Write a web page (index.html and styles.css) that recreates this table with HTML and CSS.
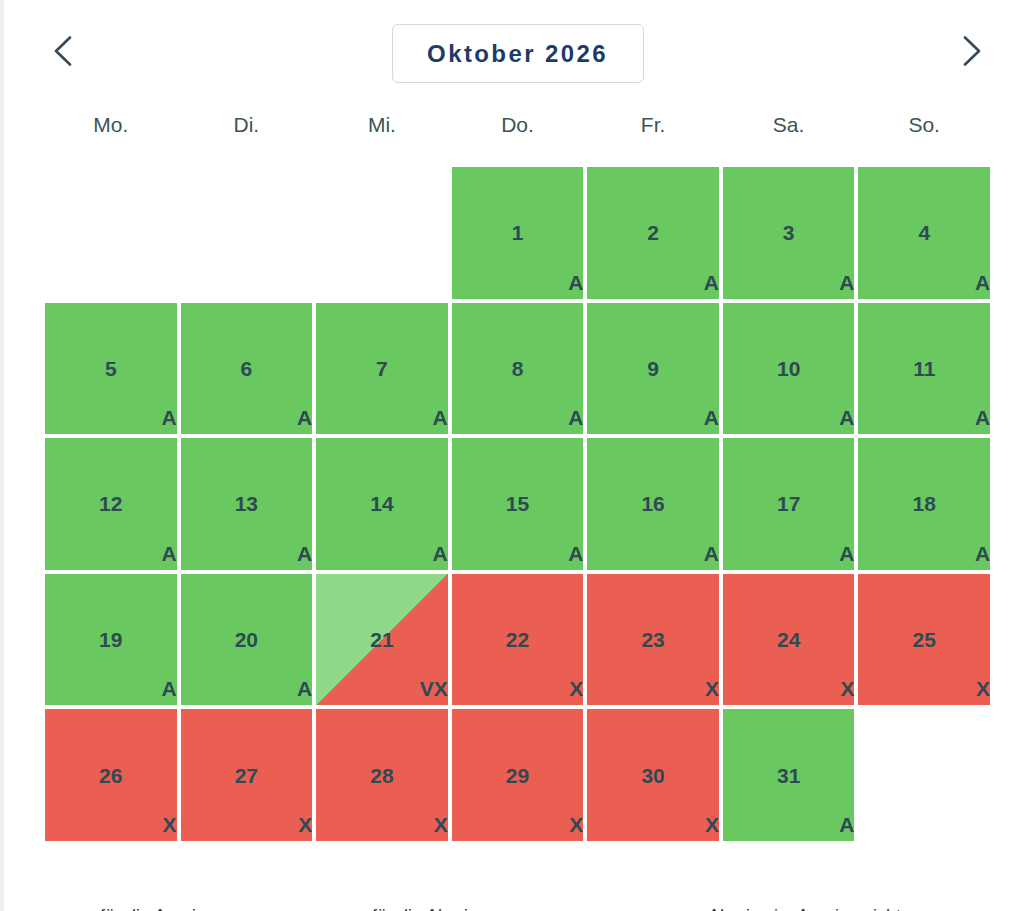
FILE: index.html
```html
<!DOCTYPE html>
<html lang="de">
<head>
<meta charset="utf-8">
<title>Oktober 2026</title>
<link rel="stylesheet" href="styles.css">
</head>
<body>
<div class="page">
  <header class="nav">
    <button class="arrow" aria-label="Vorheriger Monat">
      <svg width="20" height="30" viewBox="0 0 20 30"><polyline points="17,1.5 3,15 17,28.5" fill="none" stroke="#34495a" stroke-width="2.6" stroke-linecap="round" stroke-linejoin="round"/></svg>
    </button>
    <div class="month">Oktober 2026</div>
    <button class="arrow" aria-label="Nächster Monat">
      <svg width="20" height="30" viewBox="0 0 20 30"><polyline points="3,1.5 17,15 3,28.5" fill="none" stroke="#34495a" stroke-width="2.6" stroke-linecap="round" stroke-linejoin="round"/></svg>
    </button>
  </header>

  <div class="weekdays">
    <div>Mo.</div><div>Di.</div><div>Mi.</div><div>Do.</div><div>Fr.</div><div>Sa.</div><div>So.</div>
  </div>

  <div class="days">
    <div class="empty"></div><div class="empty"></div><div class="empty"></div>
    <div class="day a"><span class="num">1</span><span class="tag">A</span></div>
    <div class="day a"><span class="num">2</span><span class="tag">A</span></div>
    <div class="day a"><span class="num">3</span><span class="tag">A</span></div>
    <div class="day a"><span class="num">4</span><span class="tag">A</span></div>
    <div class="day a"><span class="num">5</span><span class="tag">A</span></div>
    <div class="day a"><span class="num">6</span><span class="tag">A</span></div>
    <div class="day a"><span class="num">7</span><span class="tag">A</span></div>
    <div class="day a"><span class="num">8</span><span class="tag">A</span></div>
    <div class="day a"><span class="num">9</span><span class="tag">A</span></div>
    <div class="day a"><span class="num">10</span><span class="tag">A</span></div>
    <div class="day a"><span class="num">11</span><span class="tag">A</span></div>
    <div class="day a"><span class="num">12</span><span class="tag">A</span></div>
    <div class="day a"><span class="num">13</span><span class="tag">A</span></div>
    <div class="day a"><span class="num">14</span><span class="tag">A</span></div>
    <div class="day a"><span class="num">15</span><span class="tag">A</span></div>
    <div class="day a"><span class="num">16</span><span class="tag">A</span></div>
    <div class="day a"><span class="num">17</span><span class="tag">A</span></div>
    <div class="day a"><span class="num">18</span><span class="tag">A</span></div>
    <div class="day a"><span class="num">19</span><span class="tag">A</span></div>
    <div class="day a"><span class="num">20</span><span class="tag">A</span></div>
    <div class="day vx"><span class="num">21</span><span class="tag">VX</span></div>
    <div class="day x"><span class="num">22</span><span class="tag">X</span></div>
    <div class="day x"><span class="num">23</span><span class="tag">X</span></div>
    <div class="day x"><span class="num">24</span><span class="tag">X</span></div>
    <div class="day x"><span class="num">25</span><span class="tag">X</span></div>
    <div class="day x"><span class="num">26</span><span class="tag">X</span></div>
    <div class="day x"><span class="num">27</span><span class="tag">X</span></div>
    <div class="day x"><span class="num">28</span><span class="tag">X</span></div>
    <div class="day x"><span class="num">29</span><span class="tag">X</span></div>
    <div class="day x"><span class="num">30</span><span class="tag">X</span></div>
    <div class="day a"><span class="num">31</span><span class="tag">A</span></div>
  </div>

  <div class="legend">
    <div class="legend-item">für die Anreise</div>
    <div class="legend-item">für die Abreise</div>
    <div class="legend-item">Abreise ja, Anreise nicht</div>
  </div>
</div>
</body>
</html>
```

FILE: styles.css
```css
html, body {
  margin: 0;
  padding: 0;
  background: #ffffff;
  font-family: "Liberation Sans", Arial, sans-serif;
  color: #2d4a52;
}

.page {
  border-left: 4px solid #f0f0f0;
  padding: 24px 34px 0 41px;
  min-height: 911px;
  box-sizing: border-box;
}

.nav {
  display: flex;
  align-items: center;
  justify-content: space-between;
  height: 59px;
}

.arrow {
  width: 36px;
  height: 40px;
  padding: 0;
  border: 0;
  background: none;
  display: flex;
  align-items: center;
  justify-content: center;
  margin-bottom: 5px;
  cursor: pointer;
}

.month {
  width: 252px;
  height: 59px;
  box-sizing: border-box;
  border: 1px solid #d8d8d8;
  border-radius: 6px;
  display: flex;
  align-items: center;
  justify-content: center;
  font-weight: 700;
  font-size: 24px;
  letter-spacing: 2.4px;
  color: #1e3a69;
}

.weekdays {
  display: grid;
  grid-template-columns: repeat(7, 1fr);
  column-gap: 4px;
  margin: 22px 0;
  height: 40px;
  line-height: 40px;
  text-align: center;
  font-size: 21px;
  color: #3c5458;
}

.days {
  display: grid;
  grid-template-columns: repeat(7, 1fr);
  gap: 4px;
}

.day {
  aspect-ratio: 1 / 1;
  display: grid;
  font-weight: 700;
  color: #2e4a53;
}

.num,
.tag {
  grid-area: 1 / 1;
}

.num {
  place-self: center;
  font-size: 21px;
  line-height: 1;
}

.tag {
  align-self: end;
  justify-self: end;
  font-size: 21px;
  line-height: 1;
  margin-bottom: 6px;
}

.a {
  background: #69c85f;
}

.x {
  background: #eb5e52;
}

.vx {
  background: linear-gradient(to top left, #eb5e52 50%, #8fd98b 50%);
}

.legend {
  display: grid;
  grid-template-columns: 272px 336px auto;
  margin: 64px 0 0 55px;
  font-size: 18px;
  line-height: 22px;
  color: #2e3d45;
}
```
